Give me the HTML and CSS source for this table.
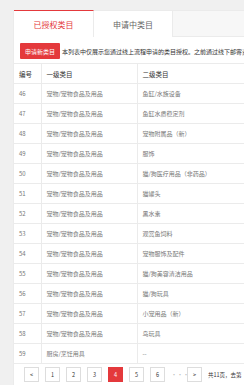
FILE: index.html
```html
<!DOCTYPE html>
<html lang="zh">
<head>
<meta charset="utf-8">
<link rel="stylesheet" href="styles.css">
</head>
<body>
<div class="panel">
  <div class="tabs">
    <div class="tab active">已授权类目</div>
    <div class="tab">申请中类目</div>
    <div class="tab-rest"></div>
  </div>
  <div class="toolbar">
    <span class="btn">申请新类目</span>
    <span class="note">本列表中仅展示您通过线上流程申请的类目授权。之前通过线下邮寄资质申请的类目授权请联系客服查询。</span>
  </div>
  <table class="grid">
    <colgroup><col class="c1"><col class="c2"><col class="c3"></colgroup>
    <thead>
      <tr><th>编号</th><th>一级类目</th><th>二级类目</th></tr>
    </thead>
    <tbody>
      <tr><td>46</td><td>宠物/宠物食品及用品</td><td>鱼缸/水族设备</td></tr>
      <tr><td>47</td><td>宠物/宠物食品及用品</td><td>鱼缸水质稳定剂</td></tr>
      <tr><td>48</td><td>宠物/宠物食品及用品</td><td>宠物附属品（新）</td></tr>
      <tr><td>49</td><td>宠物/宠物食品及用品</td><td>服饰</td></tr>
      <tr><td>50</td><td>宠物/宠物食品及用品</td><td>猫/狗医疗用品（非药品）</td></tr>
      <tr><td>51</td><td>宠物/宠物食品及用品</td><td>猫罐头</td></tr>
      <tr><td>52</td><td>宠物/宠物食品及用品</td><td>黑水素</td></tr>
      <tr><td>53</td><td>宠物/宠物食品及用品</td><td>观赏鱼饲料</td></tr>
      <tr><td>54</td><td>宠物/宠物食品及用品</td><td>宠物服饰及配件</td></tr>
      <tr><td>55</td><td>宠物/宠物食品及用品</td><td>猫/狗美容清洁用品</td></tr>
      <tr><td>56</td><td>宠物/宠物食品及用品</td><td>猫/狗玩具</td></tr>
      <tr><td>57</td><td>宠物/宠物食品及用品</td><td>小宠用品（新）</td></tr>
      <tr><td>58</td><td>宠物/宠物食品及用品</td><td>鸟玩具</td></tr>
      <tr><td>59</td><td>厨房/烹饪用具</td><td>--</td></tr>
    </tbody>
  </table>
  <div class="pager">
    <span class="pg">&lt;</span>
    <span class="pg">1</span>
    <span class="pg">2</span>
    <span class="pg">3</span>
    <span class="pg cur">4</span>
    <span class="pg">5</span>
    <span class="pg">6</span>
    <span class="dots">···</span>
    <span class="pg">&gt;</span>
    <span class="total">共11页，去第</span>
    <span class="jump"></span>
  </div>
</div>
</body>
</html>
```
FILE: styles.css
```css
html, body {
  margin: 0;
  padding: 0;
  overflow: hidden;
  background: #f0f0f0;
  font-family: "Noto Sans CJK SC", "Noto Sans", sans-serif;
}
.panel {
  margin: 10px 0 0 13px;
  width: 420px;
  background: #fff;
  border-left: 1px solid #ebebeb;
}
.tabs {
  display: flex;
  height: 27px;
  background: #f7f7f7;
}
.tab {
  width: 79px;
  box-sizing: border-box;
  display: flex;
  align-items: center;
  justify-content: center;
  font-size: 8px;
  color: #666;
  background: #fff;
  border-top: 1px solid #ebebeb;
  border-right: 1px solid #ebebeb;
}
.tab.active {
  width: 80px;
  color: #e4393c;
  border-top: 1px solid #e4393c;
}
.tab-rest {
  flex: 1;
  border-top: 1px solid #ebebeb;
  border-bottom: 1px solid #ebebeb;
}
.toolbar {
  display: flex;
  align-items: center;
  gap: 2px;
  padding: 6px 0 4px 6px;
  white-space: nowrap;
}
.btn {
  display: inline-flex;
  align-items: center;
  justify-content: center;
  width: 40px;
  height: 16px;
  background: #e4393c;
  color: #fff;
  font-size: 6px;
  border-radius: 1px;
}
.note {
  font-size: 6px;
  color: #333;
}
.grid {
  border-collapse: collapse;
  width: 420px;
  table-layout: fixed;
}
.c1 { width: 27px; }
.c2 { width: 96px; }
.grid th, .grid td {
  height: 19px;
  padding: 0 0 0 5px;
  border: 1px solid #ebebeb;
  border-left: 0;
  text-align: left;
  font-size: 6px;
  color: #777;
  font-weight: normal;
  white-space: nowrap;
}
.grid th {
  color: #333;
  font-size: 6.5px;
}
.grid td + td, .grid th + th {
  border-left: 1px solid #ebebeb;
}
.pager {
  display: flex;
  align-items: center;
  gap: 6px;
  padding: 3px 0 4px 10px;
  white-space: nowrap;
}
.pg {
  box-sizing: border-box;
  width: 15px;
  height: 15px;
  border: 1px solid #ddd;
  display: flex;
  align-items: center;
  justify-content: center;
  font-size: 5.5px;
  color: #333;
  background: #fff;
}
.pg.cur {
  background: #e4393c;
  border-color: #e4393c;
  color: #fff;
}
.dots {
  font-size: 6px;
  color: #bbb;
  width: 10px;
}
.total {
  font-size: 5.5px;
  color: #333;
}
.jump {
  width: 20px;
  height: 15px;
  box-sizing: border-box;
  border: 1px solid #ddd;
  background: #fff;
}
```
